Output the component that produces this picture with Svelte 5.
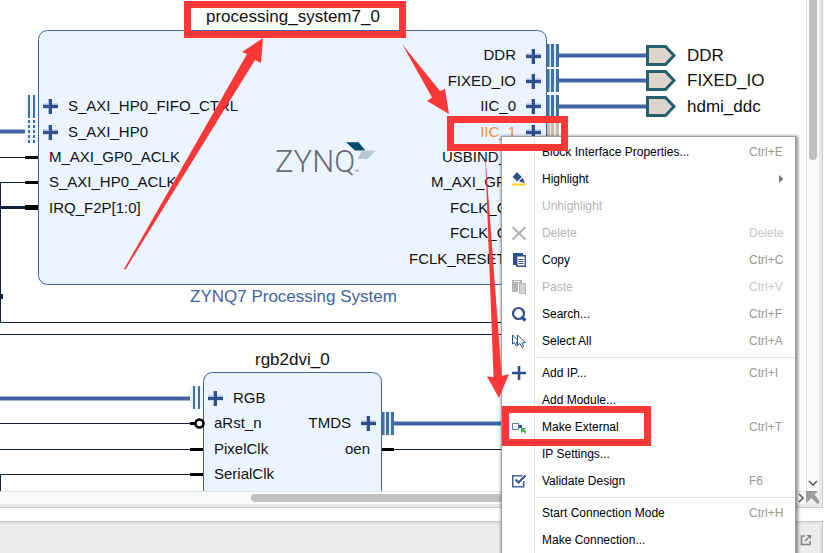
<script>
  const menu = [
    [
      { label: 'Block Interface Properties...', keys: 'Ctrl+E' },
      { label: 'Highlight', icon: 'highlight', sub: true },
      { label: 'Unhighlight', off: true },
      { label: 'Delete', icon: 'delete', keys: 'Delete', off: true },
      { label: 'Copy', icon: 'copy', keys: 'Ctrl+C' },
      { label: 'Paste', icon: 'paste', keys: 'Ctrl+V', off: true },
      { label: 'Search...', icon: 'search', keys: 'Ctrl+F' },
      { label: 'Select All', icon: 'select', keys: 'Ctrl+A' }
    ],
    [
      { label: 'Add IP...', icon: 'add', keys: 'Ctrl+I' },
      { label: 'Add Module...' },
      { label: 'Make External', icon: 'external', keys: 'Ctrl+T' },
      { label: 'IP Settings...' },
      { label: 'Validate Design', icon: 'validate', keys: 'F6' }
    ],
    [
      { label: 'Start Connection Mode', keys: 'Ctrl+H' },
      { label: 'Make Connection...' }
    ]
  ];

  const pins = [
    { x: 68, y: 111, t: 'S_AXI_HP0_FIFO_CTRL' },
    { x: 68, y: 137, t: 'S_AXI_HP0' },
    { x: 49, y: 162, t: 'M_AXI_GP0_ACLK' },
    { x: 49, y: 187, t: 'S_AXI_HP0_ACLK' },
    { x: 49, y: 213, t: 'IRQ_F2P[1:0]' },
    { x: 516, y: 60, t: 'DDR', end: true },
    { x: 516, y: 86, t: 'FIXED_IO', end: true },
    { x: 516, y: 111, t: 'IIC_0', end: true },
    { x: 516, y: 137, t: 'IIC_1', end: true, hot: true },
    { x: 442, y: 162, t: 'USBIND_0' },
    { x: 431, y: 187, t: 'M_AXI_GP0' },
    { x: 450, y: 213, t: 'FCLK_CLK0' },
    { x: 450, y: 238, t: 'FCLK_CLK1' },
    { x: 409, y: 264, t: 'FCLK_RESET0_N' },
    { x: 233, y: 403, t: 'RGB' },
    { x: 214, y: 428, t: 'aRst_n' },
    { x: 214, y: 454, t: 'PixelClk' },
    { x: 214, y: 479, t: 'SerialClk' },
    { x: 351, y: 428, t: 'TMDS', end: true },
    { x: 370, y: 454, t: 'oen', end: true }
  ];

  const pluses = [[50, 106], [50, 132], [533, 56], [533, 81], [533, 106], [533, 132], [215, 398], [368, 423]];
  const ports = [
    { y: 55, t: 'DDR' },
    { y: 80, t: 'FIXED_IO' },
    { y: 106, t: 'hdmi_ddc' }
  ];
  const buses = [[547, 44], [547, 69], [547, 95], [382, 412]];
  const thick = ['M0 131.5H25', 'M559 55.5H646', 'M559 80.5H646', 'M559 106.5H646', 'M0 398.5H190', 'M394 423.5H700'];
</script>

<div class="app">
  <main class="workspace">
    <div class="canvas">
      <svg class="diagram" width="806" height="491" role="img" aria-label="Block design">
        <path class="wire" d="M0 157.5H25M0 182.5H25M.5 182V322.5H700M0 334.5H700M0 423.5H190M0 449.5H190M.5 491V474.5H190M394 449.5H700" />
        <path class="wire wide" d="M0 207.5H25" />
        <rect x="0" y="294" width="3" height="5" fill="#10203c" />
        {#each thick as d}
          <path class="halo" {d} />
          <path class="bus" {d} />
        {/each}

        <rect class="block" x="38.5" y="30.5" width="508" height="254" rx="9" />
        <rect class="block" x="203.5" y="372.5" width="178" height="150" rx="9" />

        <path class="stub" d="M25 157.5H38M25 182.5H38M190 449.5H203M190 474.5H203M382 449.5H394M190 423.5H195" />
        <path class="stub fat" d="M25 207.5H38" />
        <circle cx="199.5" cy="423.5" r="4" fill="#fff" stroke="#000" stroke-width="2.6" />

        <path fill="#ecf5ff" d="M25 95h13v23h-13zM25 120h13v23h-13zM190 386h13v23h-13z" />
        <path class="stripe" d="M29 95V118M34 95V118M194 386V409M199 386V409" />
        <path class="stripe" stroke-dasharray="3 2" d="M29 120V143M34 120V143" />
        {#each buses as [x, y]}
          <rect {x} {y} width="12" height="23" fill="#dfeefb" />
          <path class="stripe broad" d="M{x + 1} {y}v23M{x + 5.5} {y}v23M{x + 10.5} {y}v23" />
        {/each}
        <rect x="547" y="120" width="12" height="23" fill="#ffe6d5" />
        <path stroke="#c5bcb8" stroke-width="3" d="M548.5 120v23M552.5 120v23M557.5 120v23" />

        {#each pluses as [x, y]}
          <path stroke="#a9b9d8" stroke-width="5" d="M{x - 7} {y}h15" />
          <path stroke="#a9b9d8" stroke-width="4" d="M{x} {y - 7}v15" />
          <path stroke="#304f8b" stroke-width="3" d="M{x - 7} {y + 0.5}h15M{x + 0.5} {y - 7}v15" />
        {/each}

        {#each ports as p}
          <path
            fill="#ddd4cf"
            stroke="#26606e"
            stroke-width="3"
            d="M647.5 {p.y - 8.5}h18l8.5 9l-8.5 9h-18z"
          />
          <text class="big" x="687" y={p.y + 6}>{p.t}</text>
        {/each}

        {#each pins as p}
          <text class="pin" class:end={p.end} class:hot={p.hot} x={p.x} y={p.y}>{p.t}</text>
        {/each}

        <text class="big" x="206" y="22">processing_system7_0</text>
        <text class="big kind" x="190" y="302">ZYNQ7 Processing System</text>
        <text class="big" x="255" y="365">rgb2dvi_0</text>

        <text class="logo" x="275" y="172">ZYNQ</text>
        <text class="tm" x="354" y="173">™</text>
        <path fill="#004a74" d="M346 142.3H358.5L365.5 150.5H355z" />
        <path fill="#b7c8d7" d="M362 150.5H376L367.5 159H357.5z" />
      </svg>
    </div>
    <div class="vbar">
      <span class="vthumb"></span>
      <svg width="12" height="16" viewBox="0 0 12 16"><path d="M2 6l4 4l4-4" fill="none" stroke="#555" stroke-width="1.5" /></svg>
    </div>
    <div class="hbar">
      <span class="hthumb"></span>
      <svg width="12" height="12" viewBox="0 0 12 12"><path d="M5 2l4 4l-4 4" fill="none" stroke="#555" stroke-width="1.5" /></svg>
    </div>
    <div class="corner">
      <svg width="13" height="13" viewBox="0 0 13 13">
        <path fill="#9c9c9c" d="M0 0H12L8.500 3.500L13 9.500V12.500H11L5.500 7L0 12z" />
      </svg>
    </div>
  </main>

  <footer class="dock">
    <button class="float" aria-label="Float">
      <svg width="12" height="12" viewBox="0 0 12 12">
        <path d="M5 2H1.500V10.500H10V7" fill="none" stroke="#858585" stroke-width="1.600" />
        <path d="M5 7L8.500 3.500" stroke="#858585" stroke-width="1.600" />
        <path d="M6.500 1H11V5.500z" fill="#858585" />
      </svg>
    </button>
  </footer>

  <div class="menu" role="menu">
    {#each menu as group}
      <div class="group">
        {#each group as item}
          <button class="item" role="menuitem" disabled={item.off}>
            <span class="ico">
              {#if item.icon}
                <svg width="16" height="16" viewBox="0 0 16 16">
                  {#if item.icon === 'highlight'}
                    <path fill="#2f4f8b" d="M6 1L11 6.200L6.500 10.500L1.500 6zM11.500 6.500L14 12L8 10.500z" />
                    <path stroke="#fff" stroke-width="1" d="M11.500 6L6.500 11" />
                    <path fill="#f7cf1d" d="M1 12.500h14v2h-14z" />
                  {:else if item.icon === 'delete'}
                    <path stroke="#b5b5b5" stroke-width="2.400" d="M1.500 2L14.500 14.500M14.500 2L1.500 14.500" />
                  {:else if item.icon === 'copy'}
                    <path fill="#2f4f8b" d="M2 1h10v2H5v10H2z" />
                    <path fill="#fff" stroke="#2f4f8b" stroke-width="1.400" d="M5.700 3.700h8.600v10.600H5.700z" />
                    <path stroke="#2f4f8b" d="M7.500 7.500h5M7.500 9.500h5M7.500 11.500h5" />
                  {:else if item.icon === 'paste'}
                    <path fill="#b5b5b5" d="M1 1h10v12H1z" />
                    <path stroke="#fff" d="M3 2.500h6" />
                    <path stroke="#fff" d="M7.500 4V14" />
                    <path fill="#d2d2d2" stroke="#b5b5b5" d="M8.500 4.500h6v10h-6z" />
                  {:else if item.icon === 'search'}
                    <circle cx="7.500" cy="7.500" r="5.500" fill="none" stroke="#2f4f8b" stroke-width="2.200" />
                    <path stroke="#2f4f8b" stroke-width="3" d="M10.500 11L14.500 14.500" />
                  {:else if item.icon === 'select'}
                    <path fill="#fff" stroke="#2f4f8b" d="M1.500 2V11L3.500 9.500L5 13L6.500 12.500L5.500 9L8 8.500z" />
                    <path fill="#fff" stroke="#2f4f8b" d="M6.500 2V12L9 10.500L11 14.500L12.500 13.500L11 10L14.500 9.500z" />
                  {:else if item.icon === 'add'}
                    <path stroke="#2f4f8b" stroke-width="2.600" d="M1 8H15M8 1V15" />
                  {:else if item.icon === 'external'}
                    <path fill="#fff" stroke="#5b76a8" d="M1.500 4.500h6v6h-6z" />
                    <path fill="#2f4f8b" d="M8 6h3v3H8z" />
                    <path fill="#37b24a" d="M10 9h5l-1.500 1.500Q15.500 12 15 15Q13.500 13 12 12.500L10 14z" />
                  {:else if item.icon === 'validate'}
                    <path fill="none" stroke="#4763a0" stroke-width="1.600" d="M11.500 2.800H1.800V13.700H12.700V8" />
                    <path fill="none" stroke="#2f4f8b" stroke-width="2" d="M4.500 6.500L7.500 9.500L14.500 2.500" />
                  {/if}
                </svg>
              {/if}
            </span>
            <span class="label">{item.label}</span>
            {#if item.keys}<span class="keys">{item.keys}</span>{/if}
            {#if item.sub}
              <svg class="more" width="5" height="8" viewBox="0 0 5 8"><path fill="#777" d="M0 0L4.500 4L0 8z" /></svg>
            {/if}
          </button>
        {/each}
      </div>
    {/each}
  </div>

  <svg class="marks" width="828" height="553" aria-hidden="true">
    <g fill="none" stroke="#fb3838" stroke-width="7">
      <rect x="187.500" y="4.500" width="215" height="30" />
      <rect x="450.500" y="119.500" width="114" height="28" />
      <rect x="505.500" y="409.500" width="142" height="33" />
    </g>
    <g fill="#fb3838">
      <path d="M124 269L247 54L242 52L263 38L261 63L255 60L125.500 269.500z" />
      <path d="M402 44L440 91L445 89L449 114L427 101L432 97.500z" />
      <path d="M485 151L501.700 376L509 374L499 398L487 376.500L493.500 377z" />
    </g>
  </svg>
</div>

<style>
  :global(body) {
    margin: 0;
    background: #fff;
  }
  .app {
    position: relative;
    display: flex;
    flex-direction: column;
    gap: 13px;
    box-sizing: border-box;
    height: 100vh;
    padding-right: 5px;
    overflow: hidden;
    font-family: 'Liberation Sans', Arial, sans-serif;
  }
  .workspace {
    display: grid;
    grid-template-columns: 1fr 13px;
    grid-template-rows: auto 13px;
    border: solid #ccc;
    border-width: 0 1px 1px 0;
    box-shadow: inset -3px -3px #e8e8e8;
    padding: 0 3px 3px 0;
  }
  .canvas {
    overflow: hidden;
    min-width: 0;
    background: #fff;
  }
  .diagram {
    display: block;
  }
  .vbar {
    display: flex;
    flex-direction: column;
    justify-content: space-between;
    box-sizing: border-box;
    border-left: 1px solid #e2e2e2;
    background: #fafafa;
  }
  .vthumb {
    width: 8px;
    height: 160px;
    margin-left: 2px;
    border-radius: 0 0 4px 4px;
    background: #c1c1c1;
  }
  .hbar {
    display: flex;
    align-items: center;
    box-sizing: border-box;
    border-top: 1px solid #e2e2e2;
    padding-left: 251px;
    background: #fafafa;
  }
  .hthumb {
    flex: 1;
    height: 8px;
    margin-right: 40px;
    border-radius: 4px;
    background: #c1c1c1;
  }
  .corner {
    background: #f0f0f0;
  }
  .corner svg {
    display: block;
  }
  .dock {
    flex: 1;
    display: flex;
    justify-content: flex-end;
    align-items: flex-start;
    border: solid #c8c8c8;
    border-width: 1px 1px 0 0;
    box-shadow: inset -2px 2px #e2e2e2;
    background: #ececec;
    padding: 12px 10px 0 0;
  }
  .float {
    display: flex;
    border: 0;
    padding: 0;
    background: none;
  }

  .wire {
    fill: none;
    stroke: #10203c;
  }
  .wide {
    stroke-width: 3;
  }
  .halo {
    stroke: #a3b3d3;
    stroke-width: 5;
  }
  .bus {
    stroke: #4363a5;
    stroke-width: 3;
  }
  .block {
    fill: #ecf5ff;
    stroke: #4062a2;
  }
  .stub {
    stroke: #000;
    stroke-width: 3;
  }
  .fat {
    stroke-width: 5;
  }
  .stripe {
    stroke: #4070a6;
    stroke-width: 2;
  }
  .broad {
    stroke-width: 3;
  }
  .pin {
    font-size: 15px;
    fill: #111;
  }
  .end {
    text-anchor: end;
  }
  .hot {
    fill: #f58a3c;
  }
  .big {
    font-size: 17px;
    fill: #111;
  }
  .kind {
    fill: #4363a5;
  }
  .logo {
    font-family: Roboto, sans-serif;
    font-size: 31px;
    font-weight: 300;
    fill: #6a6c6f;
  }
  .tm {
    font-size: 5px;
    fill: #6a6c6f;
  }

  .menu {
    position: absolute;
    top: 136px;
    left: 501px;
    width: 293px;
    border: 1px solid #a0a0a0;
    padding: 1px 0;
    background: linear-gradient(#e2e2e2, #e2e2e2) 32px 2px / 1px 100% no-repeat #fff;
    box-shadow: 1px 1px 3px 1px rgba(0, 0, 0, 0.45);
  }
  .group + .group {
    position: relative;
    padding-top: 5px;
  }
  .group + .group::before {
    content: '';
    position: absolute;
    top: 3px;
    left: 35px;
    right: 0;
    height: 1px;
    background: #e0e0e0;
  }
  .item {
    display: flex;
    align-items: center;
    width: 100%;
    height: 27px;
    border: 0;
    padding: 0 11px 0 0;
    background: none;
    color: #000;
    font: 12px/14px 'Liberation Sans', Arial, sans-serif;
    text-align: left;
  }
  .item:disabled {
    color: #b4b4b4;
  }
  .ico {
    width: 31px;
    height: 16px;
    padding-left: 9px;
    box-sizing: border-box;
    margin-right: 9px;
  }
  .label {
    flex: 1;
  }
  .keys {
    width: 35px;
    color: #999990;
    white-space: nowrap;
  }
  .item:disabled .keys {
    color: #c8c8c8;
  }
  .marks {
    position: absolute;
    top: 0;
    left: 0;
    pointer-events: none;
  }
</style>
